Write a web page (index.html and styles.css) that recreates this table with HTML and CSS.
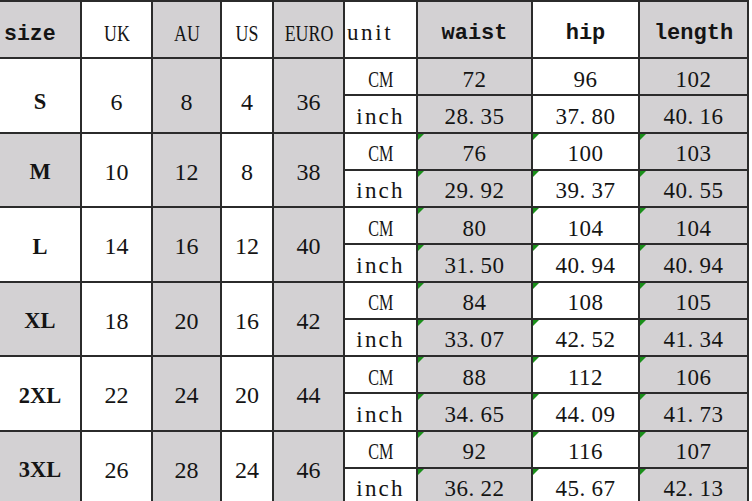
FILE: index.html
```html
<!DOCTYPE html>
<html lang="en">
<head>
<meta charset="utf-8">
<title>Size chart</title>
<link rel="stylesheet" href="styles.css">
</head>
<body>
<div class="chart">
  <div class="c g hd size-h">size</div>
  <div class="c hc"><span class="nar">UK</span></div>
  <div class="c g hc"><span class="nar">AU</span></div>
  <div class="c hc"><span class="nar">US</span></div>
  <div class="c g hc"><span class="nar">EURO</span></div>
  <div class="c unit-h">unit</div>
  <div class="c g hd">waist</div>
  <div class="c hd">hip</div>
  <div class="c g hd">length</div>

  <div class="c blk sz first">S</div>
  <div class="c blk first">6</div>
  <div class="c g blk first">8</div>
  <div class="c blk first">4</div>
  <div class="c g blk first">36</div>
  <div class="c d"><span class="cm">CM</span></div>
  <div class="c g d">72</div>
  <div class="c d">96</div>
  <div class="c g d">102</div>
  <div class="c d u">inch</div>
  <div class="c g d">28<span class="dot">.</span>35</div>
  <div class="c d">37<span class="dot">.</span>80</div>
  <div class="c g d">40<span class="dot">.</span>16</div>

  <div class="c g blk sz">M</div>
  <div class="c blk">10</div>
  <div class="c g blk">12</div>
  <div class="c blk">8</div>
  <div class="c g blk">38</div>
  <div class="c d"><span class="cm">CM</span></div>
  <div class="c g d f">76</div>
  <div class="c d f">100</div>
  <div class="c g d f">103</div>
  <div class="c d u">inch</div>
  <div class="c g d f">29<span class="dot">.</span>92</div>
  <div class="c d f">39<span class="dot">.</span>37</div>
  <div class="c g d f">40<span class="dot">.</span>55</div>

  <div class="c blk sz">L</div>
  <div class="c blk">14</div>
  <div class="c g blk">16</div>
  <div class="c blk">12</div>
  <div class="c g blk">40</div>
  <div class="c d"><span class="cm">CM</span></div>
  <div class="c g d f">80</div>
  <div class="c d f">104</div>
  <div class="c g d f">104</div>
  <div class="c d u">inch</div>
  <div class="c g d f">31<span class="dot">.</span>50</div>
  <div class="c d f">40<span class="dot">.</span>94</div>
  <div class="c g d f">40<span class="dot">.</span>94</div>

  <div class="c g blk sz">XL</div>
  <div class="c blk">18</div>
  <div class="c g blk">20</div>
  <div class="c blk">16</div>
  <div class="c g blk">42</div>
  <div class="c d"><span class="cm">CM</span></div>
  <div class="c g d f">84</div>
  <div class="c d f">108</div>
  <div class="c g d f">105</div>
  <div class="c d u">inch</div>
  <div class="c g d f">33<span class="dot">.</span>07</div>
  <div class="c d f">42<span class="dot">.</span>52</div>
  <div class="c g d f">41<span class="dot">.</span>34</div>

  <div class="c blk sz">2XL</div>
  <div class="c blk">22</div>
  <div class="c g blk">24</div>
  <div class="c blk">20</div>
  <div class="c g blk">44</div>
  <div class="c d"><span class="cm">CM</span></div>
  <div class="c g d f">88</div>
  <div class="c d f">112</div>
  <div class="c g d f">106</div>
  <div class="c d u">inch</div>
  <div class="c g d f">34<span class="dot">.</span>65</div>
  <div class="c d f">44<span class="dot">.</span>09</div>
  <div class="c g d f">41<span class="dot">.</span>73</div>

  <div class="c g blk sz">3XL</div>
  <div class="c blk">26</div>
  <div class="c g blk">28</div>
  <div class="c blk">24</div>
  <div class="c g blk">46</div>
  <div class="c d"><span class="cm">CM</span></div>
  <div class="c g d f">92</div>
  <div class="c d f">116</div>
  <div class="c g d f">107</div>
  <div class="c d u">inch</div>
  <div class="c g d f">36<span class="dot">.</span>22</div>
  <div class="c d f">45<span class="dot">.</span>67</div>
  <div class="c g d f">42<span class="dot">.</span>13</div>
</div>
</body>
</html>
```

FILE: styles.css
```css
html, body {
  margin: 0;
  padding: 0;
  background: #ffffff;
  overflow: hidden;
}

.chart {
  display: grid;
  width: max-content;
  grid-template-columns: 80px 69px 67px 50px 69px 71px 113px 105px 107px;
  grid-template-rows: 55px repeat(12, 35.25px);
  gap: 2px;
  padding: 2px 2px 2px 0;
  background: #2b2b2b;
  font-family: "Liberation Serif", "Times New Roman", serif;
  color: #141414;
}

.c {
  background: #ffffff;
  display: flex;
  align-items: center;
  justify-content: center;
  position: relative;
  box-sizing: border-box;
  white-space: nowrap;
}

.g {
  background: #d3d1d3;
}

/* header */
.hd {
  font-family: "Liberation Mono", "Courier New", monospace;
  font-weight: bold;
  font-size: 22px;
  padding-top: 8px;
}

.size-h {
  justify-content: flex-start;
  padding-left: 4px;
  font-size: 21.5px;
}

.hc {
  font-size: 23.5px;
  padding-top: 7px;
}

.unit-h {
  justify-content: flex-start;
  padding-left: 2px;
  padding-top: 7px;
  font-size: 23px;
  letter-spacing: 2.6px;
}

.nar {
  display: inline-block;
  transform: scaleX(0.76);
}

/* size blocks */
.blk {
  grid-row: span 2;
  font-size: 24px;
  padding-top: 5px;
}

.blk.first {
  padding-top: 14px;
}

.sz {
  font-weight: bold;
  font-size: 22.5px;
}

/* data rows */
.d {
  font-size: 23px;
  padding-top: 6px;
  letter-spacing: 0.5px;
}

.u {
  letter-spacing: 2.2px;
}

.cm {
  display: inline-block;
  transform: scaleX(0.7);
  letter-spacing: 0;
}

.dot {
  letter-spacing: 6.3px;
}

.f::before {
  content: "";
  position: absolute;
  top: 0;
  left: 0;
  width: 0;
  height: 0;
  border-top: 6px solid #1a8f1a;
  border-right: 6px solid transparent;
}
```
